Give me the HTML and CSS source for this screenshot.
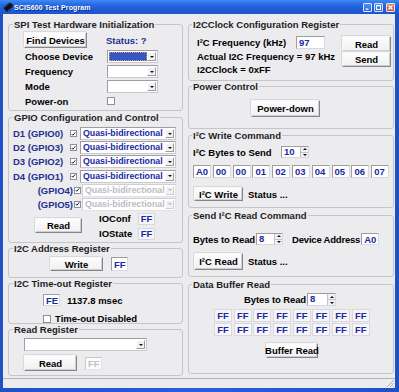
FILE: index.html
```html
<!DOCTYPE html>
<html lang="en">
<head>
<meta charset="utf-8">
<title>SCIS600 Test Program</title>
<link rel="stylesheet" href="styles.css">
</head>
<body>
<div class="window">
  <div class="titlebar">
    <svg class="appicon" width="11" height="10" viewBox="0 0 11 10" aria-hidden="true">
      <g transform="rotate(-40 5.5 5)">
        <rect x="1" y="2.8" width="9" height="4.4" fill="#111"/>
        <path d="M2 1.6v1.2M4 1.6v1.2M6 1.6v1.2M8 1.6v1.2M2 7.2v1.2M4 7.2v1.2M6 7.2v1.2M8 7.2v1.2" stroke="#111" stroke-width="0.9"/>
      </g>
    </svg>
    <span class="ttext">SCIS600 Test Program</span>
    <div class="wbtns">
      <span class="wb"><svg width="7" height="7" viewBox="0 0 7 7"><rect x="1.5" y="4.5" width="3" height="1.2" fill="#fff"/></svg></span>
      <span class="wb"><svg width="7" height="7" viewBox="0 0 7 7"><rect x="1.5" y="1.5" width="4" height="4" fill="none" stroke="#fff" stroke-width="1"/><rect x="1" y="1" width="5" height="1.2" fill="#fff"/></svg></span>
      <span class="wb close"><svg width="7" height="7" viewBox="0 0 7 7"><path d="M1.5 1.5l4 4M5.5 1.5l-4 4" stroke="#fff" stroke-width="1.2"/></svg></span>
    </div>
  </div>

  <div class="client">
    <div class="cols">
      <div class="col left">
        <fieldset class="grp g-spi">
          <legend>SPI Test Hardware Initialization</legend>
          <div class="spi-grid">
            <button class="btn b-find">Find Devices</button>
            <span class="navy status">Status: ?</span>
            <span class="lbl">Choose Device</span>
            <div class="combo w51"><span class="cval sel"></span><span class="cbtn"></span></div>
            <span class="lbl">Frequency</span>
            <div class="combo w51"><span class="cval"></span><span class="cbtn"></span></div>
            <span class="lbl">Mode</span>
            <div class="combo w51"><span class="cval"></span><span class="cbtn"></span></div>
            <span class="lbl">Power-on</span>
            <span class="chk"></span>
          </div>
        </fieldset>

        <fieldset class="grp g-gpio">
          <legend>GPIO Configuration and Control</legend>
          <div class="gp-rows">
            <div class="gp-row d"><span class="gl">D1 (GPIO0)</span><span class="chk on"><svg width="6" height="6" viewBox="0 0 6 6"><path d="M0.8 3l1.4 1.5L5.2 1" fill="none" stroke="#111" stroke-width="1.1"/></svg></span><div class="combo gcombo"><span class="cval">Quasi-bidirectional</span><span class="cbtn"></span></div></div>
            <div class="gp-row d"><span class="gl">D2 (GPIO3)</span><span class="chk on"><svg width="6" height="6" viewBox="0 0 6 6"><path d="M0.8 3l1.4 1.5L5.2 1" fill="none" stroke="#111" stroke-width="1.1"/></svg></span><div class="combo gcombo"><span class="cval">Quasi-bidirectional</span><span class="cbtn"></span></div></div>
            <div class="gp-row d"><span class="gl">D3 (GPIO2)</span><span class="chk on"><svg width="6" height="6" viewBox="0 0 6 6"><path d="M0.8 3l1.4 1.5L5.2 1" fill="none" stroke="#111" stroke-width="1.1"/></svg></span><div class="combo gcombo"><span class="cval">Quasi-bidirectional</span><span class="cbtn"></span></div></div>
            <div class="gp-row d"><span class="gl">D4 (GPIO1)</span><span class="chk on"><svg width="6" height="6" viewBox="0 0 6 6"><path d="M0.8 3l1.4 1.5L5.2 1" fill="none" stroke="#111" stroke-width="1.1"/></svg></span><div class="combo gcombo"><span class="cval">Quasi-bidirectional</span><span class="cbtn"></span></div></div>
            <div class="gp-row g"><span class="gl">(GPIO4)</span><span class="chk on"><svg width="6" height="6" viewBox="0 0 6 6"><path d="M0.8 3l1.4 1.5L5.2 1" fill="none" stroke="#111" stroke-width="1.1"/></svg></span><div class="combo gcombo dis"><span class="cval">Quasi-bidirectional</span><span class="cbtn"></span></div></div>
            <div class="gp-row g"><span class="gl">(GPIO5)</span><span class="chk on"><svg width="6" height="6" viewBox="0 0 6 6"><path d="M0.8 3l1.4 1.5L5.2 1" fill="none" stroke="#111" stroke-width="1.1"/></svg></span><div class="combo gcombo dis"><span class="cval">Quasi-bidirectional</span><span class="cbtn"></span></div></div>
          </div>
          <div class="gp-bottom">
            <button class="btn b-gread">Read</button>
            <span class="lbl io1">IOConf</span><span class="cell io1v">FF</span>
            <span class="lbl io2">IOState</span><span class="cell io2v">FF</span>
          </div>
        </fieldset>

        <fieldset class="grp g-addr">
          <legend>I2C Address Register</legend>
          <div class="row addr-row">
            <button class="btn b-write">Write</button>
            <span class="inp addr-ff">FF</span>
          </div>
        </fieldset>

        <fieldset class="grp g-tout">
          <legend>I2C Time-out Register</legend>
          <div class="row tout-r1">
            <span class="inp fe">FE</span><span class="msec">1137.8 msec</span>
          </div>
          <div class="row tout-r2">
            <span class="chk"></span><span class="tdis">Time-out Disabled</span>
          </div>
        </fieldset>

        <fieldset class="grp g-rreg">
          <legend>Read Register</legend>
          <div class="combo rcombo"><span class="cval"></span><span class="cbtn"></span></div>
          <div class="row rreg-r2">
            <button class="btn b-rread">Read</button>
            <span class="inp dis rff">FF</span>
          </div>
        </fieldset>
      </div>

      <div class="col right">
        <fieldset class="grp g-clk">
          <legend>I2CClock Configuration Register</legend>
          <div class="clk">
            <div class="clk-l">
              <div class="row clk-r1"><span class="clk-lbl">I²C Frequency (kHz)</span><span class="inp f97">97</span></div>
              <div class="clk-line">Actual I2C Frequency = 97 kHz</div>
              <div class="clk-line">I2CClock = 0xFF</div>
            </div>
            <div class="clk-btns">
              <button class="btn b-cread">Read</button>
              <button class="btn b-send">Send</button>
            </div>
          </div>
        </fieldset>

        <fieldset class="grp g-pwr">
          <legend>Power Control</legend>
          <button class="btn b-pwr">Power-down</button>
        </fieldset>

        <fieldset class="grp g-wr">
          <legend>I²C Write Command</legend>
          <div class="row wr-r1">
            <span class="wr-lbl">I²C Bytes to Send</span>
            <div class="spin s28"><span class="sval">10</span><span class="sbtn"><i class="up"></i><i class="dn"></i></span></div>
          </div>
          <div class="hexrow">
            <span class="inp hx">A0</span><span class="inp hx">00</span><span class="inp hx">00</span><span class="inp hx">01</span><span class="inp hx">02</span><span class="inp hx">03</span><span class="inp hx">04</span><span class="inp hx">05</span><span class="inp hx">06</span><span class="inp hx">07</span>
          </div>
          <div class="row wr-r3">
            <button class="btn b-i2c">I²C Write</button><span class="stat">Status ...</span>
          </div>
        </fieldset>

        <fieldset class="grp g-rd">
          <legend>Send I²C Read Command</legend>
          <div class="row rd-r1">
            <span class="rd-lbl">Bytes to Read</span>
            <div class="spin s27"><span class="sval">8</span><span class="sbtn"><i class="up"></i><i class="dn"></i></span></div>
            <span class="dev-lbl">Device Address</span>
            <span class="inp devaddr">A0</span>
          </div>
          <div class="row rd-r2">
            <button class="btn b-i2cr">I²C Read</button><span class="stat">Status ...</span>
          </div>
        </fieldset>

        <fieldset class="grp g-buf">
          <legend>Data Buffer Read</legend>
          <div class="row buf-r1">
            <span class="rd-lbl">Bytes to Read</span>
            <div class="spin s29"><span class="sval">8</span><span class="sbtn"><i class="up"></i><i class="dn"></i></span></div>
          </div>
          <div class="bufgrid">
            <span class="cell">FF</span><span class="cell">FF</span><span class="cell">FF</span><span class="cell">FF</span><span class="cell">FF</span><span class="cell">FF</span><span class="cell">FF</span><span class="cell">FF</span>
            <span class="cell">FF</span><span class="cell">FF</span><span class="cell">FF</span><span class="cell">FF</span><span class="cell">FF</span><span class="cell">FF</span><span class="cell">FF</span><span class="cell">FF</span>
          </div>
          <button class="btn b-buf">Buffer Read</button>
        </fieldset>
      </div>
    </div>

    <div class="statusbar">
      <svg class="grip" width="10" height="9" viewBox="0 0 10 9" aria-hidden="true">
        <path d="M9 1L2 8M9 4L5 8M9 7L8 8" stroke="#a9a8ad" stroke-width="1"/>
        <path d="M10 1.5L3 8.5M10 4.5L6 8.5" stroke="#fff" stroke-width="0.8"/>
      </svg>
    </div>
  </div>
</div>
</body>
</html>
```

FILE: styles.css
```css
* { box-sizing: border-box; }
html, body { margin: 0; padding: 0; }
body {
  width: 399px;
  height: 392px;
  overflow: hidden;
  font: bold 9.5px/11px "Liberation Sans", Arial, sans-serif;
  color: #000;
  white-space: nowrap;
  background: #2458d0;
}
.window {
  width: 399px;
  height: 392px;
  display: flex;
  flex-direction: column;
  background: linear-gradient(90deg, #1f50c6, #2a5fd8 50%, #1f50c6);
}

/* title bar */
.titlebar {
  height: 14px;
  flex: none;
  display: flex;
  align-items: center;
  padding: 0 4px 0 3px;
  background: linear-gradient(#3d8af4 0%, #2a6ce6 30%, #1f5bd6 65%, #1d55cc 100%);
  color: #fff;
}
.appicon { flex: none; }
.ttext {
  font-size: 7px;
  line-height: 9px;
  letter-spacing: 0.1px;
  text-shadow: 1px 1px 0 #0b2f8a;
}
.wbtns { margin-left: auto; display: flex; gap: 2px; }
.wb {
  width: 9px;
  height: 9px;
  display: flex;
  align-items: center;
  justify-content: center;
  border: 1px solid #dfe8fb;
  border-radius: 1px;
  background: linear-gradient(#4d8ff7, #2a66e2);
}
.wb.close { background: linear-gradient(#e98a5c, #cf4f22); margin-left: 1px; }

/* client */
.client {
  flex: 1;
  margin: 0 4px 4px 3px;
  background: #ecebee;
  display: flex;
  flex-direction: column;
}
.cols { flex: 1; display: flex; }
.col { display: flex; flex-direction: column; }
.left { width: 175px; margin-left: 5px; }
.right { width: 206px; margin-left: 5px; }

.statusbar {
  height: 10px;
  flex: none;
  border-top: 1px solid #b4b3b8;
  display: flex;
  justify-content: flex-end;
  align-items: flex-end;
}

/* group boxes */
.grp {
  margin: 0;
  padding: 0;
  border: 1px solid #c6c5ca;
  border-radius: 3px;
  min-width: 0;
  flex: none;
}
.grp > legend {
  padding: 0 1px;
  margin-left: 4px;
  line-height: 11px;
  color: #1e1e1e;
}
.right .grp > legend { margin-left: 3px; }

.g-spi { margin-top: 5px; height: 92px; }
.g-gpio { margin-top: 1px; height: 131px; }
.g-addr { height: 35px; }
.g-tout { height: 46px; }
.g-rreg { height: 52px; }

.g-clk { margin-top: 5px; height: 62px; }
.g-pwr { height: 48px; }
.g-wr { margin-top: 1px; height: 78px; }
.g-rd { margin-top: 2px; height: 67px; }
.g-buf { margin-top: 2px; height: 95px; }

.row { display: flex; align-items: center; }
.navy { color: #24308e; }

/* controls */
.btn {
  font: inherit;
  color: #000;
  padding: 0;
  margin: 0;
  display: flex;
  align-items: center;
  justify-content: center;
  white-space: nowrap;
  overflow: visible;
  background: linear-gradient(#fdfdfd, #f1f0f2);
  border: 1px solid;
  border-color: #f8f8f8 #86858a #86858a #f8f8f8;
  box-shadow: inset -1px -1px 0 #cfced3, -1px -1px 0 #d9d8dc;
}
.inp {
  display: flex;
  align-items: center;
  padding-left: 2px;
  background: #fff;
  border: 1px solid;
  border-color: #9e9da3 #d9d8dd #d9d8dd #9e9da3;
  color: #1a29a6;
}
.inp.dis { color: #c0c0c4; background: #fbfbfc; border-color: #c9c8cd #e4e3e7 #e4e3e7 #c9c8cd; }
.cell {
  display: flex;
  align-items: center;
  justify-content: center;
  background: #f6f6f9;
  border: 1px solid #d9d8df;
  color: #1a29a6;
}
.chk {
  width: 8px;
  height: 8px;
  flex: none;
  display: flex;
  align-items: center;
  justify-content: center;
  background: #fff;
  border: 1px solid #8d8f9c;
}
.combo {
  display: flex;
  height: 13px;
  padding: 1px;
  background: #fff;
  border: 1px solid;
  border-color: #9e9da3 #c9c8cd #c9c8cd #9e9da3;
  flex: none;
}
.cval {
  flex: 1;
  min-width: 0;
  overflow: hidden;
  line-height: 9px;
  font-size: 8.8px;
  padding-left: 1px;
  color: #1a29a6;
}
.cval.sel { background: #3457c4; outline: 1px dotted #e09a48; outline-offset: -1px; }
.cbtn {
  width: 9px;
  flex: none;
  display: flex;
  align-items: center;
  justify-content: center;
  background: #f1f0f3;
  border: 1px solid;
  border-color: #fff #9c9ba0 #9c9ba0 #fff;
}
.cbtn::after {
  content: "";
  border-left: 2px solid transparent;
  border-right: 2px solid transparent;
  border-top: 2px solid #111;
}
.combo.dis { border-color: #cfced3 #e2e1e5 #e2e1e5 #cfced3; }
.combo.dis .cval { color: #bdbcc2; }
.combo.dis .cbtn { border-color: #fff #cfced3 #cfced3 #fff; }
.combo.dis .cbtn::after { border-top-color: #b9b8bd; }

.spin {
  display: flex;
  height: 12px;
  background: #fff;
  border: 1px solid;
  border-color: #9e9da3 #d9d8dd #d9d8dd #9e9da3;
  flex: none;
}
.sval { flex: 1; line-height: 10px; padding-left: 2px; color: #1a29a6; }
.sbtn {
  width: 8px;
  display: flex;
  flex-direction: column;
  background: #f1f0f3;
  border-left: 1px solid #c4c3c8;
}
.sbtn i {
  flex: 1;
  display: flex;
  align-items: center;
  justify-content: center;
}
.sbtn i.up { border-bottom: 1px solid #c4c3c8; }
.sbtn i.up::after {
  content: "";
  border-left: 2px solid transparent;
  border-right: 2px solid transparent;
  border-bottom: 2px solid #111;
}
.sbtn i.dn::after {
  content: "";
  border-left: 2px solid transparent;
  border-right: 2px solid transparent;
  border-top: 2px solid #111;
}
.s28 { width: 28px; }
.s27 { width: 27px; }
.s29 { width: 29px; height: 13px; }

/* SPI */
.spi-grid {
  display: grid;
  grid-template-columns: 83px 51px;
  grid-template-rows: 16px 13px 13px 13px 12px;
  row-gap: 2px;
  margin: 2px 0 0 15px;
  align-items: center;
}
.spi-grid .lbl { padding-left: 1px; }
.b-find { width: 63px; height: 16px; }
.status { margin-left: -1px; }
.w51 { width: 51px; }

/* GPIO */
.gp-rows { margin-top: 4px; display: flex; flex-direction: column; gap: 1.2px; }
.gp-row { display: flex; align-items: center; height: 13px; }
.gl { color: #24308e; }
.gp-row.d .gl { width: 61px; padding-left: 4px; }
.gp-row.d .combo { margin-left: 3px; width: 96px; }
.gp-row.g .gl { width: 65px; text-align: right; padding-right: 1px; }
.gp-row.g .combo { margin-left: 1px; width: 94px; }
.gp-row .chk { width: 7px; height: 7px; }

.gp-bottom {
  display: grid;
  grid-template-columns: 64px 39px 17px;
  grid-template-rows: 12px 12px;
  row-gap: 3px;
  margin: 2px 0 0 26px;
  align-items: center;
}
.b-gread { grid-row: 1 / span 2; grid-column: 1; align-self: start; margin-top: 5px; width: 47px; height: 15px; }
.io1 { grid-row: 1; grid-column: 2; }
.io1v { grid-row: 1; grid-column: 3; height: 12px; }
.io2 { grid-row: 2; grid-column: 2; }
.io2v { grid-row: 2; grid-column: 3; height: 12px; }

/* address */
.addr-row { margin: 3px 0 0 41px; }
.b-write { width: 53px; height: 14px; }
.addr-ff { width: 17px; height: 14px; margin-left: 8px; }

/* timeout */
.tout-r1 { margin: 5px 0 0 34px; }
.fe { width: 17px; height: 12px; }
.msec { margin-left: 7px; }
.tout-r2 { margin: 7px 0 0 34px; height: 11px; }
.tdis { margin-left: 4px; }

/* read register */
.rcombo { margin: 3px 0 0 15px; width: 123px; }
.rreg-r2 { margin: 4px 0 0 15px; }
.b-rread { width: 53px; height: 16px; }
.rff { width: 17px; height: 13px; margin-left: 8px; }

/* clock */
.clk { display: flex; }
.clk-l { margin-left: 8px; display: flex; flex-direction: column; }
.clk-r1 { margin-top: 6px; height: 13px; }
.clk-lbl { width: 99px; }
.f97 { width: 29px; height: 13px; }
.clk-line { margin-top: 2px; }
.clk-btns { margin: 6px 2px 0 auto; display: flex; flex-direction: column; }
.b-cread { width: 49px; height: 16px; }
.b-send { width: 49px; height: 15px; }

/* power */
.b-pwr { margin: 8px 0 0 62px; width: 69px; height: 17px; }

/* write */
.wr-r1 { margin: 5px 0 0 4px; height: 12px; }
.wr-lbl { width: 88px; }
.hexrow {
  display: grid;
  grid-template-columns: repeat(10, 18px);
  column-gap: 1.8px;
  margin: 7px 0 0 4px;
}
.hx { height: 13px; }
.wr-r3 { margin: 9px 0 0 5px; }
.b-i2c { width: 49px; height: 14px; }
.stat { margin-left: 5px; }

/* read cmd */
.rd-r1 { margin: 12px 0 0 4px; height: 12px; }
.rd-lbl { margin-right: 1px; letter-spacing: -0.1px; }
.dev-lbl { margin-left: 9px; margin-right: 1px; letter-spacing: -0.2px; }
.devaddr { width: 18px; height: 12px; }
.rd-r2 { margin: 8px 0 0 5px; }
.b-i2cr { width: 49px; height: 17px; }

/* buffer */
.buf-r1 { margin: 3px 0 0 55px; height: 13px; }
.bufgrid {
  display: grid;
  grid-template-columns: repeat(8, 18px);
  grid-template-rows: 13px 13px;
  column-gap: 1.7px;
  row-gap: 1px;
  margin: 3px 0 0 25px;
}
.b-buf { margin: 7px 0 0 77px; width: 52px; height: 15px; }
```
